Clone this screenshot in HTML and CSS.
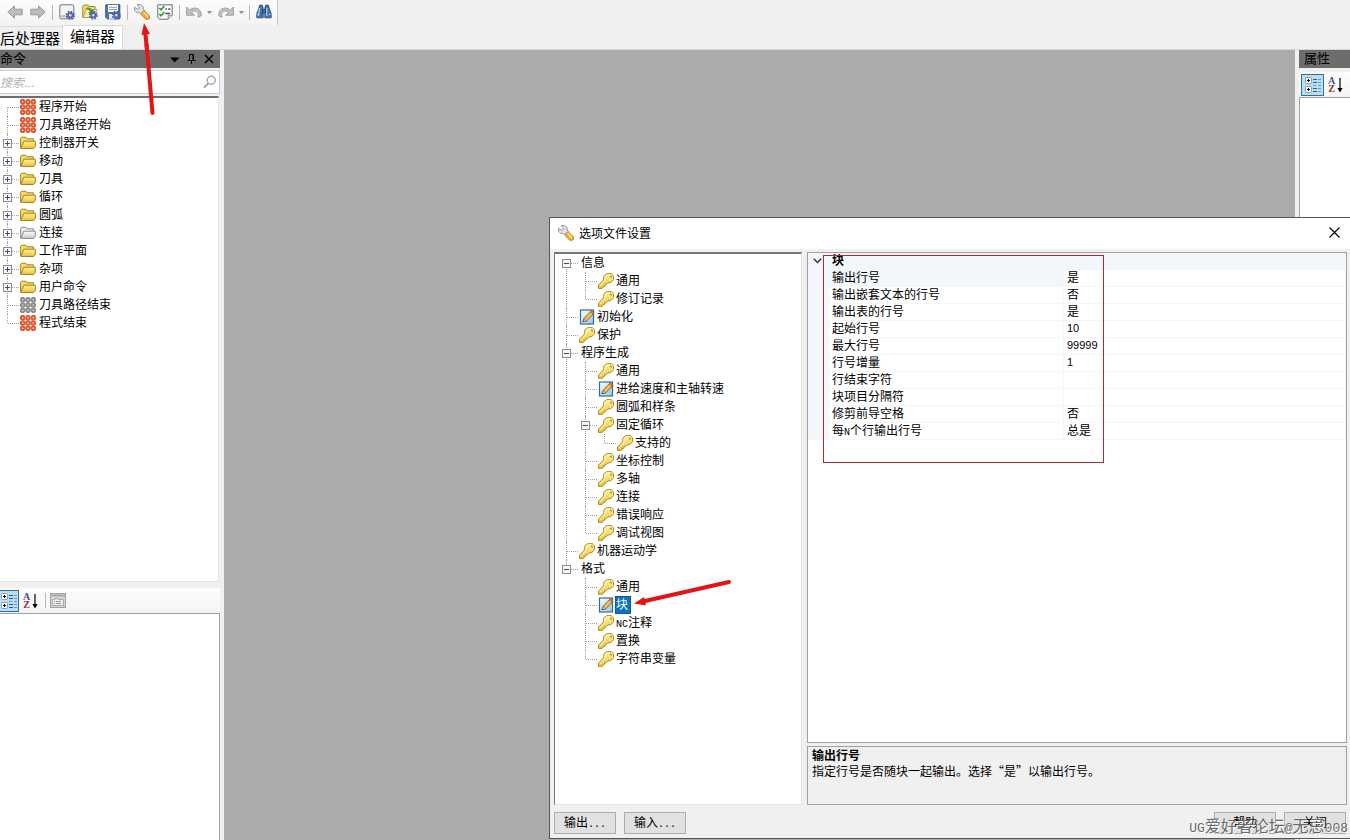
FILE: index.html
```html
<!DOCTYPE html>
<html lang="zh-CN">
<head>
<meta charset="utf-8">
<title>选项文件设置</title>
<link rel="stylesheet" href="styles.css">
</head>
<body>
<svg class="defs" aria-hidden="true">
  <defs>
    <linearGradient id="gold" x1="0" y1="0" x2="0" y2="1"><stop offset="0" stop-color="#fff3a0"/><stop offset="1" stop-color="#eebf33"/></linearGradient>
    <linearGradient id="silver" x1="0" y1="0" x2="0" y2="1"><stop offset="0" stop-color="#ffffff"/><stop offset="1" stop-color="#c4c4c4"/></linearGradient>
    <linearGradient id="sky" x1="0" y1="0" x2="1" y2="1"><stop offset="0" stop-color="#ffffff"/><stop offset="1" stop-color="#8fc6ee"/></linearGradient>
  </defs>
  <symbol id="key" viewBox="0 0 16 16">
    <path d="M5.6 6.8 5.8 3.2 8.6.7 13.2.6 15.5 2.8 15.5 6.6 12.9 9.6 10 9.9 8.6 11.3 7.2 11.5 6.9 13.1 5.3 13.4 4.8 15 2.8 15.6.5 15.5.5 12.2Z" fill="url(#gold)" stroke="#b08a1c" stroke-width="1"/>
    <path d="M1.8 13 7 7.6V4.2L9.2 2H12" stroke="#fffbd8" fill="none"/>
    <path d="M12.2 2.8 13.7 4.3" stroke="#8f6b10" stroke-width="1.1"/>
  </symbol>
  <symbol id="note" viewBox="0 0 16 16">
    <rect x="1.5" y="1" width="13" height="14" fill="url(#sky)" stroke="#2d6d9d" stroke-width="1.2"/>
    <path d="M4 12.6 5 9.5 11.6 2.6 14.4 5 7.7 12Z" fill="#f3c04a" stroke="#7a5c2a" stroke-width=".9"/>
    <path d="M4 12.6 5 9.5 7.6 12Z" fill="#f6e2c0" stroke="#6b4b25" stroke-width=".6"/>
    <path d="M11.2 2.8 12.5 1.6 15.2 4 14.1 5.2Z" fill="#e07e50" stroke="#7a4a2a" stroke-width=".5"/>
    <path d="M3.5 13 5 12.6 4.2 11.6Z" fill="#222"/>
  </symbol>
  <symbol id="folder" viewBox="0 0 16 16">
    <path d="M.6 13V3.4L1.7 2.2H5.8L7 3.8H13.4V6.2" fill="#f6dd62" stroke="#a08220"/>
    <path d="M.8 13.4 3.8 6.2H15.3V11.4L13.6 13.5Z" fill="url(#gold)" stroke="#a08220"/>
  </symbol>
  <symbol id="folder-off" viewBox="0 0 16 16">
    <path d="M.6 13V3.4L1.7 2.2H5.8L7 3.8H13.4V6.2" fill="#ececec" stroke="#8b8b8b"/>
    <path d="M.8 13.4 3.8 6.2H15.3V11.4L13.6 13.5Z" fill="url(#silver)" stroke="#8b8b8b"/>
  </symbol>
  <symbol id="dots" viewBox="0 0 16 16">
    <g fill="#ffe3d4" stroke="currentColor" stroke-width="2">
      <circle cx="2.7" cy="2.7" r="1.8"/><circle cx="8" cy="2.7" r="1.8"/><circle cx="13.3" cy="2.7" r="1.8"/>
      <circle cx="2.7" cy="8" r="1.8"/><circle cx="8" cy="8" r="1.8"/><circle cx="13.3" cy="8" r="1.8"/>
      <circle cx="2.7" cy="13.3" r="1.8"/><circle cx="8" cy="13.3" r="1.8"/><circle cx="13.3" cy="13.3" r="1.8"/>
    </g>
  </symbol>
  <symbol id="gear" viewBox="0 0 10 10">
    <circle cx="5" cy="5" r="3.7" fill="none" stroke="#4a5aa8" stroke-width="2.2" stroke-dasharray="1.6 1.3"/>
    <circle cx="5" cy="5" r="2.3" fill="#dfe4fa" stroke="#5365b5" stroke-width="1.9"/>
  </symbol>
  <symbol id="wrench" viewBox="0 0 16 16">
    <path d="M.7 3.4 3.7 5.2 5.3 4.6 5.1 2.6 3 .6 6.5.4 9.2 2.8 9.2 5.3 10.8 7 7.4 10.2 5.6 8.6 2.6 8.2.5 6.2Z" fill="#e1e4ec" stroke="#868d9a" stroke-width=".9"/>
    <path d="M6.6 9.8 10 6.4 15.5 12 15.4 14.4 13.4 15.6 11.4 14.9Z" fill="#f5ae2a" stroke="#b07a2a" stroke-width=".9"/>
    <path d="M9.6 8.2 14.2 13" stroke="#ffe18a" stroke-width="1.4"/>
  </symbol>
  <symbol id="categorized" viewBox="0 0 18 18">
    <g fill="#fff" stroke="#7f9db9"><rect x="1.5" y="1.5" width="6" height="6" rx="1"/><rect x="1.5" y="10.5" width="6" height="6" rx="1"/></g>
    <path d="M3 4.5h3M4.5 3v3M3 13.5h3M4.5 12v3" stroke="#000"/>
    <path d="M9 3.5h4M9 6.5h4M9 12.5h4M9 15.5h4" stroke="#3c5878"/>
    <path d="M14 3.5h3M14 6.5h3M9 9.5h3M14 9.5h3M14 12.5h3M14 15.5h3" stroke="#7394b5"/>
  </symbol>
  <symbol id="down" viewBox="0 0 6 16"><path d="M3 1V12" stroke="#000" stroke-width="1.2"/><path d="M.4 11H5.6L3 15.5Z"/></symbol>
</svg>

<header class="top">
  <div class="toolbar" role="toolbar">
    <button class="tool" aria-label="后退"><svg viewBox="0 0 16 16"><path d="M.8 8 7.5 1.8V5.2H15.2V10.8H7.5V14.2Z" fill="#bcbcbc" stroke="#9b9b9b"/></svg></button>
    <button class="tool" aria-label="前进"><svg viewBox="0 0 16 16"><path d="M15.2 8 8.5 1.8V5.2H.8V10.8H8.5V14.2Z" fill="#bcbcbc" stroke="#9b9b9b"/></svg></button>
    <span class="sep"></span>
    <button class="tool" aria-label="新建"><svg viewBox="0 0 16 16"><rect x=".8" y=".8" width="14" height="14" rx="1.2" fill="#f4f4f5" stroke="#77777f"/><path d="M1.5 12.2H14" stroke="#bbb" stroke-width="2"/><use href="#gear" x="6.5" y="6.5" width="9.5" height="9.5"/></svg></button>
    <button class="tool" aria-label="打开"><svg viewBox="0 0 16 16"><path d="M.8 13.5V2L2 1H6L7 2.5H13V13.5Z" fill="#f5dd75" stroke="#9f8637"/><path d="M1 13.5 4 5.5H15L12.5 13.5Z" fill="#f9eaa3" stroke="#b2943c" stroke-width=".8"/><path d="M3 4.6C5.5 2.6 9 3.4 10 6L12 5 11 10.4 6 8.4 8 7.4C6.8 5.4 5 5 3 4.6Z" fill="#3da03c"/><use href="#gear" x="6.5" y="6.5" width="9.5" height="9.5"/></svg></button>
    <button class="tool" aria-label="保存"><svg viewBox="0 0 16 16"><path d="M.8.8H14.8V14.8H2.2L.8 13.4Z" fill="#4a78b7" stroke="#2f527f"/><rect x="3" y="1" width="10" height="7" fill="#fff"/><path d="M4 3.3h8M4 5.6h8" stroke="#7f9dc4"/><rect x="4" y="10" width="7" height="4.8" fill="#e3e8f2"/><use href="#gear" x="6.5" y="6.5" width="9.5" height="9.5"/></svg></button>
    <span class="sep"></span>
    <button class="tool" aria-label="选项文件设置"><svg><use href="#wrench"/></svg></button>
    <button class="tool" aria-label="检查"><svg viewBox="0 0 16 16"><path d="M.8.8H15.2V11.2L11.2 15.2H2.5L.8 13.5Z" fill="#fbfbfb" stroke="#6b6b6b"/><path d="M11.2 15V11.2H15" fill="#ddd" stroke="#777" stroke-width=".8"/><path d="M2.4 4 4 5.8 7.4 2M2.4 9.8 4 11.8 7.4 8" fill="none" stroke="#27a337" stroke-width="1.7"/><path d="M8.4 5H10M11.2 5H13.4M8.4 9.5H13" stroke="#555" stroke-width="1.3"/></svg></button>
    <span class="sep"></span>
    <button class="tool" aria-label="撤销"><svg viewBox="0 0 16 16"><path d="M.6 3V11.2H8.4L5.6 8.6C8 6 12 6.5 12.4 10.5L12 13.2 15.2 11.8C16 5 9 1.5 3.4 6.1Z" fill="#c2c2c2" stroke="#9a9a9a" stroke-width=".9"/></svg></button>
    <button class="drop" aria-label="撤销列表"><svg viewBox="0 0 5 3"><path d="M0 0H5L2.5 3Z" fill="#8c8c8c"/></svg></button>
    <button class="tool" aria-label="重做"><svg viewBox="0 0 16 16"><path d="M15.4 3V11.2H7.6L10.4 8.6C8 6 4 6.5 3.6 10.5L4 13.2.8 11.8C0 5 7 1.5 12.6 6.1Z" fill="#c2c2c2" stroke="#9a9a9a" stroke-width=".9"/></svg></button>
    <button class="drop" aria-label="重做列表"><svg viewBox="0 0 5 3"><path d="M0 0H5L2.5 3Z" fill="#8c8c8c"/></svg></button>
    <span class="sep"></span>
    <button class="tool" aria-label="查找"><svg viewBox="0 0 16 16"><g fill="#4672ab" stroke="#1e416f" stroke-width=".8"><path d="M2.8 4.5 3.5 1.2H6.5L7.2 5V13.8H.8V9.5Z"/><path d="M13.2 4.5 12.5 1.2H9.5L8.8 5V13.8H15.2V9.5Z"/><path d="M6.5 5.6h3v3.4h-3z"/></g><path d="M3.6 4 2.4 12M10.8 4V12" stroke="#b8d2ef" stroke-width="1.2"/><path d="M1.2 10.4H3M13 10.4H14.8" stroke="#dce8f5" stroke-width=".9"/></svg></button>
  </div>
  <nav class="tabs">
    <button class="tab">后处理器</button>
    <button class="tab active">编辑器</button>
  </nav>
</header>

<main class="work">
  <aside class="side">
    <div class="cap"><h2>命令</h2>
      <button aria-label="菜单"><svg viewBox="0 0 10 10"><path d="M0 3.5H9.6L4.8 8.3Z"/></svg></button>
      <button aria-label="固定"><svg viewBox="0 0 10 10" fill="none" stroke="#000"><path d="M2.5 6V.5H6.5V6M6 1V6M.5 6.5H8.5M4.5 6.5V10"/></svg></button>
      <button aria-label="关闭面板"><svg viewBox="0 0 10 10"><path d="M1 1 9 9M9 1 1 9" stroke="#000" stroke-width="1.5"/></svg></button>
    </div>
    <label class="search"><input type="text" placeholder="搜索..." aria-label="搜索"><svg viewBox="0 0 14 14"><circle cx="8.3" cy="5.3" r="4" fill="none" stroke="#9ba6b8" stroke-width="1.4"/><path d="M5.2 8.4 1 12.8" stroke="#9ba6b8" stroke-width="2"/></svg></label>
    <div class="commands">
      <ul class="tree">
        <li><div class="row"><svg class="ico red"><use href="#dots"/></svg><span>程序开始</span></div></li>
        <li><div class="row"><svg class="ico red"><use href="#dots"/></svg><span>刀具路径开始</span></div></li>
        <li><div class="row"><button class="tog plus" aria-label="展开"></button><svg class="ico"><use href="#folder"/></svg><span>控制器开关</span></div></li>
        <li><div class="row"><button class="tog plus" aria-label="展开"></button><svg class="ico"><use href="#folder"/></svg><span>移动</span></div></li>
        <li><div class="row"><button class="tog plus" aria-label="展开"></button><svg class="ico"><use href="#folder"/></svg><span>刀具</span></div></li>
        <li><div class="row"><button class="tog plus" aria-label="展开"></button><svg class="ico"><use href="#folder"/></svg><span>循环</span></div></li>
        <li><div class="row"><button class="tog plus" aria-label="展开"></button><svg class="ico"><use href="#folder"/></svg><span>圆弧</span></div></li>
        <li><div class="row"><button class="tog plus" aria-label="展开"></button><svg class="ico"><use href="#folder-off"/></svg><span>连接</span></div></li>
        <li><div class="row"><button class="tog plus" aria-label="展开"></button><svg class="ico"><use href="#folder"/></svg><span>工作平面</span></div></li>
        <li><div class="row"><button class="tog plus" aria-label="展开"></button><svg class="ico"><use href="#folder"/></svg><span>杂项</span></div></li>
        <li><div class="row"><button class="tog plus" aria-label="展开"></button><svg class="ico"><use href="#folder"/></svg><span>用户命令</span></div></li>
        <li><div class="row"><svg class="ico gray"><use href="#dots"/></svg><span>刀具路径结束</span></div></li>
        <li><div class="row"><svg class="ico red"><use href="#dots"/></svg><span>程式结束</span></div></li>
      </ul>
    </div>
    <div class="gridbar">
      <button class="view on cut" aria-label="按分类"><svg><use href="#categorized"/></svg></button>
      <button class="view az" aria-label="按字母"><span class="letters"><b>A</b><b>Z</b></span><svg class="arrow"><use href="#down"/></svg></button>
      <span class="sep"></span>
      <button class="view" aria-label="属性页"><svg class="page" viewBox="0 0 16 16"><rect x=".5" y=".5" width="15" height="14" fill="#d5d5d5" stroke="#a3a3a3"/><path d="M1 2.5H15" stroke="#aaa" stroke-width="2"/><path d="M2.5 12.5V6.5H5V5.5H8V6.5H13.5V12.5Z" fill="#eee" stroke="#aaa"/><path d="M4 8.5h1M6 8.5h5M4 10.5h1M6 10.5h5" stroke="#999"/></svg></button>
    </div>
    <div class="pane"></div>
  </aside>
  <section class="canvas"></section>
  <aside class="props">
    <div class="cap"><h2>属性</h2></div>
    <div class="gridbar">
      <button class="view on" aria-label="按分类"><svg><use href="#categorized"/></svg></button>
      <button class="view az" aria-label="按字母"><span class="letters"><b>A</b><b>Z</b></span><svg class="arrow"><use href="#down"/></svg></button>
    </div>
    <div class="pane"></div>
  </aside>
</main>

<section class="dialog" role="dialog" aria-labelledby="dlg-title">
  <div class="title"><svg class="ico"><use href="#wrench"/></svg><h1 id="dlg-title">选项文件设置</h1>
    <button aria-label="关闭"><svg viewBox="0 0 11 11"><path d="M.5.5 10.5 10.5M10.5.5.5 10.5" stroke="#000" stroke-width="1.1"/></svg></button></div>
  <div class="content">
    <div class="topics">
      <ul class="tree">
        <li><div class="row"><button class="tog" aria-label="折叠"></button><span>信息</span></div>
          <ul>
            <li><div class="row"><svg class="ico"><use href="#key"/></svg><span>通用</span></div></li>
            <li><div class="row"><svg class="ico"><use href="#key"/></svg><span>修订记录</span></div></li>
          </ul></li>
        <li><div class="row"><svg class="ico"><use href="#note"/></svg><span>初始化</span></div></li>
        <li><div class="row"><svg class="ico"><use href="#key"/></svg><span>保护</span></div></li>
        <li><div class="row"><button class="tog" aria-label="折叠"></button><span>程序生成</span></div>
          <ul>
            <li><div class="row"><svg class="ico"><use href="#key"/></svg><span>通用</span></div></li>
            <li><div class="row"><svg class="ico"><use href="#note"/></svg><span>进给速度和主轴转速</span></div></li>
            <li><div class="row"><svg class="ico"><use href="#key"/></svg><span>圆弧和样条</span></div></li>
            <li><div class="row"><button class="tog" aria-label="折叠"></button><svg class="ico"><use href="#key"/></svg><span>固定循环</span></div>
              <ul><li><div class="row"><svg class="ico"><use href="#key"/></svg><span>支持的</span></div></li></ul></li>
            <li><div class="row"><svg class="ico"><use href="#key"/></svg><span>坐标控制</span></div></li>
            <li><div class="row"><svg class="ico"><use href="#key"/></svg><span>多轴</span></div></li>
            <li><div class="row"><svg class="ico"><use href="#key"/></svg><span>连接</span></div></li>
            <li><div class="row"><svg class="ico"><use href="#key"/></svg><span>错误响应</span></div></li>
            <li><div class="row"><svg class="ico"><use href="#key"/></svg><span>调试视图</span></div></li>
          </ul></li>
        <li><div class="row"><svg class="ico"><use href="#key"/></svg><span>机器运动学</span></div></li>
        <li><div class="row"><button class="tog" aria-label="折叠"></button><span>格式</span></div>
          <ul>
            <li><div class="row"><svg class="ico"><use href="#key"/></svg><span>通用</span></div></li>
            <li><div class="row"><svg class="ico"><use href="#note"/></svg><span class="selected">块</span></div></li>
            <li><div class="row"><svg class="ico"><use href="#key"/></svg><span><i class="mono">NC</i>注释</span></div></li>
            <li><div class="row"><svg class="ico"><use href="#key"/></svg><span>置换</span></div></li>
            <li><div class="row"><svg class="ico"><use href="#key"/></svg><span>字符串变量</span></div></li>
          </ul></li>
      </ul>
    </div>
    <div class="detail">
      <div class="sheet">
        <table>
          <colgroup><col class="c-gutter"><col class="c-name"><col></colgroup>
          <tbody>
          <tr class="group"><td><svg class="chev" viewBox="0 0 9 6"><path d="M.8.8 4.5 4.5 8.2.8" fill="none" stroke="#333" stroke-width="1.5"/></svg></td><th colspan="2">块</th></tr>
          <tr class="current"><td></td><th>输出行号</th><td>是</td></tr>
          <tr><td></td><th>输出嵌套文本的行号</th><td>否</td></tr>
          <tr><td></td><th>输出表的行号</th><td>是</td></tr>
          <tr><td></td><th>起始行号</th><td class="num">10</td></tr>
          <tr><td></td><th>最大行号</th><td class="num">99999</td></tr>
          <tr><td></td><th>行号增量</th><td class="num">1</td></tr>
          <tr><td></td><th>行结束字符</th><td></td></tr>
          <tr><td></td><th>块项目分隔符</th><td></td></tr>
          <tr><td></td><th>修剪前导空格</th><td>否</td></tr>
          <tr><td></td><th>每<i class="mono">N</i>个行输出行号</th><td>总是</td></tr>
          </tbody>
        </table>
      </div>
      <div class="help"><h3>输出行号</h3><p>指定行号是否随块一起输出。选择“是”以输出行号。</p></div>
    </div>
  </div>
  <div class="actions">
    <button>输出<i class="mono">...</i></button>
    <button>输入<i class="mono">...</i></button>
    <span class="fill"></span>
    <button>帮助</button>
    <button>关闭</button>
  </div>
  <div class="frame-mark"></div>
</section>

<svg class="arrow-up" viewBox="0 0 20 96" aria-hidden="true"><path d="M7.5 22 13.5 91" stroke="#e31414" stroke-width="4" stroke-linecap="round"/><path d="M5 1 11 12 2.5 13Z" fill="#e31414"/><path d="M6 8 8 28" stroke="#e31414" stroke-width="4"/></svg>
<svg class="arrow-left" viewBox="0 0 100 32" aria-hidden="true"><path d="M12 23 96 4" stroke="#e31414" stroke-width="4" stroke-linecap="round"/><path d="M1 25.5 11 19 13 27.5Z" fill="#e31414"/></svg>
<div class="watermark"><i>UG</i>爱好者论坛<i>@</i>无忌<i>008</i></div>
</body>
</html>
```
FILE: styles.css
```css
* { box-sizing: border-box; }
body {
  margin: 0;
  height: 100vh;
  overflow: hidden;
  display: flex;
  flex-direction: column;
  position: relative;
  background: #f0f0f0;
  color: #000;
  font: 12px/18px "Noto Sans CJK SC", sans-serif;
}
button { font: inherit; color: inherit; border: 0; padding: 0; background: none; }
h1, h2, h3, p, ul { margin: 0; padding: 0; font-size: 12px; font-weight: 400; }
ul { list-style: none; }
i { font-style: normal; }
.defs { position: absolute; width: 0; height: 0; }
.mono { font-family: "Liberation Mono", monospace; font-size: 10px; line-height: 0; }

.top { height: 50px; flex: none; border-bottom: 1px solid #d6d6d6; }
.toolbar {
  display: flex;
  align-items: flex-start;
  width: 278px;
  height: 25px;
  padding-left: 3px;
  border-right: 1px solid #c4c4c4;
  background: linear-gradient(#fcfcfc, #f3f3f3);
}
.tool { width: 23px; height: 24px; display: flex; align-items: center; justify-content: center; }
.tool svg { width: 16px; height: 16px; }
.drop { width: 9px; height: 24px; display: flex; align-items: center; justify-content: center; }
.drop svg { width: 5px; height: 3px; }
.sep { align-self: center; width: 6px; height: 15px; flex: none; background: linear-gradient(#b8b8b8, #b8b8b8) 3px 0 / 1px 100% no-repeat; }
.tabs { display: flex; align-items: flex-end; height: 24px; font-size: 15px; }
.tab { width: 62px; height: 23px; line-height: 20px; border-top: 1px solid #dcdcdc; text-align: left; white-space: nowrap; overflow: hidden; }
.tab.active { width: 61px; height: 24px; line-height: 18px; padding-bottom: 4px; text-align: center; background: #fff; border: 1px solid #d9d9d9; border-bottom: 0; }

.work { flex: 1; display: flex; min-height: 0; }
.side { width: 220px; display: flex; flex-direction: column; }
.canvas { flex: 1; margin: 0 4px; background: #ababab; }
.props { width: 51px; display: flex; flex-direction: column; }
.cap { display: flex; align-items: center; height: 18px; flex: none; background: #6d6d6d; }
.cap h2 { flex: 1; font-size: 13px; line-height: 16px; padding-bottom: 2px; }
.cap button { width: 17px; height: 18px; display: flex; align-items: center; justify-content: center; }
.cap button:last-child { margin-right: 3px; }
.cap svg { width: 10px; height: 10px; }
.props .cap { padding-left: 5px; }

.search { display: flex; align-items: center; height: 24px; margin: 2px 0; padding-right: 2px; border: 1px solid #c8ced8; border-left: 0; background: #fff; }
.search input { flex: 1; min-width: 0; border: 0; padding: 0; background: none; font: italic 12px/18px "Noto Sans CJK SC", sans-serif; outline: 0; }
.search input::placeholder { color: #b3b3b3; opacity: 1; }
.search svg { width: 14px; height: 14px; }
.commands { height: 486px; margin-right: 1px; flex: none; padding: 0 0 0 3px; background: #fff; border: 1px solid #e3e3e3; border-left: 0; border-top: 2px solid #6e6e6e; }

.gridbar { display: flex; align-items: center; height: 25px; flex: none; margin-top: 6px; background: linear-gradient(#fdfdfd, #f4f4f4); }
.view { height: 22px; display: flex; align-items: center; justify-content: center; }
.view svg { width: 18px; height: 18px; }
.view.on { width: 23px; background: #b9dcf7; border: 1px solid #2f7097; }
.view.cut { width: 19px; border-left: 0; justify-content: flex-end; }
.view.az { width: 23px; gap: 2px; }
.view .arrow { width: 6px; height: 16px; }
.view .page { width: 16px; height: 16px; margin-left: 2px; }
.letters { display: flex; flex-direction: column; font: bold 10px/8px "Liberation Serif", serif; color: #36538f; }
.letters b:last-child { color: #8d3232; }
.props .gridbar { margin-top: 4px; padding-left: 2px; }
.pane { flex: 1; background: #fff; border: 1px solid #a0a0a0; border-bottom: 0; }
.side .pane { border-left: 0; }
.props .pane { border-right: 0; }

.tree li { position: relative; }
.tree li::before { content: ""; position: absolute; left: 4px; top: 0; bottom: 0; border-left: 1px dotted #a0a0a0; }
.tree li:last-child::before { bottom: auto; height: 9px; }
.tree > li:first-child::before { top: 9px; }
.tree li::after { content: ""; position: absolute; left: 5px; top: 9px; width: 11px; border-top: 1px dotted #a0a0a0; }
.tree li ul { padding-left: 19px; }
.row { display: flex; align-items: center; height: 18px; padding-left: 19px; white-space: nowrap; }
.row span { align-self: flex-start; line-height: 16px; }
.row .ico { margin: 0 2px 0 -2px; }
.ico { width: 16px; height: 16px; flex: none; }
.commands .row .ico { margin-right: 3px; }
.red { color: #dc5a35; }
.gray { color: #8c8c8c; }
.tog { position: relative; z-index: 1; width: 9px; height: 9px; margin: 0 10px 0 -19px; border: 1px solid #8c8c8c; background: linear-gradient(#33508c, #33508c) 1px 3px / 5px 1px no-repeat, #f8f8f8; }
.tog.plus { background: linear-gradient(#33508c, #33508c) 1px 3px / 5px 1px no-repeat, linear-gradient(#33508c, #33508c) 3px 1px / 1px 5px no-repeat, #f8f8f8; }
.row .selected { margin-left: -1px; padding: 0 3px 0 1px; height: 18px; background: #0a72c8; color: #fff; outline: 1px dotted #26435f; outline-offset: -1px; }

.dialog { position: absolute; left: 549px; right: 0; top: 217px; bottom: 1px; display: flex; flex-direction: column; background: #f0f0f0; border: 1px solid #555; border-right: 0; }
.title { display: flex; align-items: center; height: 31px; flex: none; padding: 0 10px 2px 8px; gap: 5px; background: #fff; }
.title h1 { flex: 1; }
.title button { width: 11px; height: 11px; display: flex; }
.content { flex: 1; min-height: 0; display: flex; gap: 5px; padding: 3px 3px 0 4px; }
.topics { width: 248px; padding: 0 0 0 7px; background: #fff; border: 1px solid #e3e3e3; border-top: 2px solid #777; border-left: 1px solid #777; }
.detail { flex: 1; display: flex; flex-direction: column; gap: 3px; }
.sheet { flex: 1; background: #fff; border: 1px solid #a0a0a0; }
.help { height: 59px; padding: 0 4px; border: 1px solid #a0a0a0; line-height: 16px; }
.help h3 { font-weight: 700; }
table { width: 100%; border-collapse: separate; border-spacing: 0; table-layout: fixed; }
.c-gutter { width: 21px; }
.c-name { width: 235px; }
td, th { height: 17px; padding: 0 3px 2px; font-weight: 400; text-align: left; line-height: 14px; border: 0 solid #f3f6fb; border-width: 0 1px 1px 0; white-space: nowrap; }
td:first-child, .group td, .group th, .current th { background: #f3f6fb; }
.group th { font-weight: 700; }
.group td { padding: 0 0 0 5px; }
.chev { display: block; width: 9px; height: 6px; }
.num { font-family: "Liberation Sans", sans-serif; font-size: 11px; }
.actions { display: flex; gap: 8px; padding: 7px 4px 4px; }
.actions button { width: 62px; height: 22px; line-height: 18px; padding-bottom: 2px; background: #e1e1e1; border: 1px solid #adadad; }
.fill { flex: 1; }

.frame-mark { position: absolute; left: 273px; top: 37px; width: 281px; height: 208px; border: 1px solid #b4292f; pointer-events: none; }
.arrow-up { position: absolute; left: 139px; top: 22px; width: 20px; height: 96px; pointer-events: none; }
.arrow-left { position: absolute; left: 633px; top: 578px; width: 100px; height: 32px; pointer-events: none; }
.watermark { position: absolute; right: 2px; bottom: 0; font-size: 16px; line-height: 22px; color: #6a6a6a; text-shadow: 1px 1px 0 #fff; pointer-events: none; }
.watermark i { font-family: "Liberation Mono", monospace; font-size: 13px; }
```
